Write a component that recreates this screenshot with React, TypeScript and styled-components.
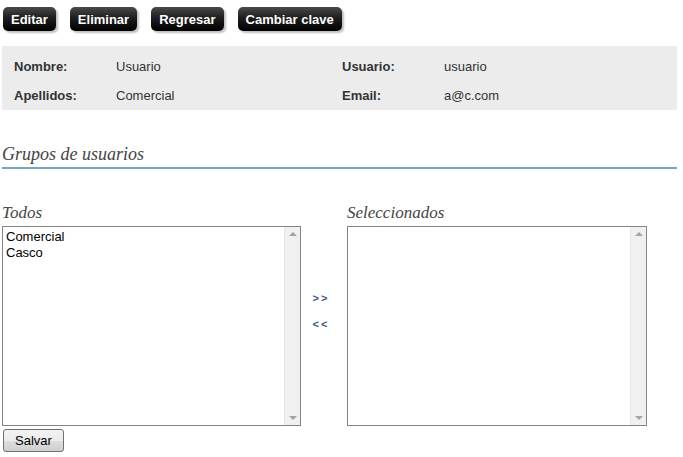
import React from "react";
import styled, { createGlobalStyle } from "styled-components";

const GlobalStyle = createGlobalStyle`
  body {
    margin: 0;
    background: #ffffff;
    font-family: "Liberation Sans", Arial, sans-serif;
    color: #333;
  }
`;

const Page = styled.div`
  width: 683px;
  padding: 7px 6px 0 2px;
  box-sizing: border-box;
`;

const Toolbar = styled.div`
  display: flex;
  gap: 14px;
  padding-left: 1px;
  height: 24px;
`;

const DarkButton = styled.button`
  height: 24px;
  padding: 0 8px;
  border: none;
  border-radius: 5px;
  background: linear-gradient(#4a4a4a 0%, #1e1e1e 45%, #000 100%);
  color: #fff;
  font-family: "Liberation Sans", Arial, sans-serif;
  font-weight: bold;
  font-size: 13px;
  box-shadow: 2px 2px 2px rgba(0, 0, 0, 0.25);
  cursor: pointer;
`;

const InfoPanel = styled.div`
  margin-top: 15px;
  background: #ececec;
  height: 64px;
  display: grid;
  grid-template-columns: 102px 226px 102px 1fr;
  grid-template-rows: 29px 29px;
  padding: 6px 0 0 12px;
  box-sizing: border-box;
  align-items: center;
  font-size: 13px;
  color: #333;
`;

const Label = styled.div`
  font-weight: bold;
`;

const Value = styled.div``;

const SectionTitle = styled.h2`
  margin: 34px 0 0;
  font-family: "Liberation Serif", "Times New Roman", serif;
  font-style: italic;
  font-weight: normal;
  font-size: 18px;
  color: #444;
  padding-bottom: 2px;
  border-bottom: 2px solid #72a7bf;
`;

const Columns = styled.div`
  margin-top: 34px;
  display: grid;
  grid-template-columns: 299px 46px 300px;
  align-items: start;
`;

const Column = styled.div`
  display: flex;
  flex-direction: column;
`;

const ColumnTitle = styled.div`
  font-family: "Liberation Serif", "Times New Roman", serif;
  font-style: italic;
  font-size: 17px;
  color: #444;
  height: 23px;
  line-height: 20px;
`;

const ListBox = styled.div`
  height: 200px;
  border: 1px solid #848484;
  box-sizing: border-box;
  display: flex;
  background: #fff;
`;

const Items = styled.div`
  flex: 1;
  padding: 2px 3px;
  font-size: 13px;
  line-height: 16px;
  color: #000;
`;

const ScrollTrack = styled.div`
  width: 16px;
  background: #f0f0f0;
  border-left: 1px solid #e6e6e6;
  display: flex;
  flex-direction: column;
  justify-content: space-between;
  align-items: center;
  padding: 5px 0;
  box-sizing: border-box;
`;

const Arrow = styled.div<{ $down?: boolean }>`
  width: 0;
  height: 0;
  border-left: 4px solid transparent;
  border-right: 4px solid transparent;
  ${(p) =>
    p.$down
      ? "border-top: 4px solid #a3a3a3;"
      : "border-bottom: 4px solid #a3a3a3;"}
`;

const Movers = styled.div`
  display: flex;
  flex-direction: column;
  align-items: center;
  gap: 12px;
  padding: 88px 6px 0 0;
`;

const MoveLink = styled.a`
  font-size: 11px;
  font-weight: bold;
  color: #3b5a82;
  letter-spacing: 2px;
  text-decoration: none;
  line-height: 14px;
  cursor: pointer;
`;

const SaveButton = styled.button`
  margin-top: 3px;
  margin-left: 1px;
  height: 23px;
  padding: 0 11px;
  border: 1px solid #707070;
  border-radius: 3px;
  background: linear-gradient(#f2f2f2 0%, #ebebeb 50%, #dddddd 51%, #cfcfcf 100%);
  font-family: "Liberation Sans", Arial, sans-serif;
  font-size: 13px;
  color: #000;
`;

const List = ({ items }: { items: string[] }) => (
  <ListBox>
    <Items>
      {items.map((i) => (
        <div key={i}>{i}</div>
      ))}
    </Items>
    <ScrollTrack>
      <Arrow />
      <Arrow $down />
    </ScrollTrack>
  </ListBox>
);

export default function App() {
  return (
    <Page>
      <GlobalStyle />
      <Toolbar>
        <DarkButton>Editar</DarkButton>
        <DarkButton>Eliminar</DarkButton>
        <DarkButton>Regresar</DarkButton>
        <DarkButton>Cambiar clave</DarkButton>
      </Toolbar>
      <InfoPanel>
        <Label>Nombre:</Label>
        <Value>Usuario</Value>
        <Label>Usuario:</Label>
        <Value>usuario</Value>
        <Label>Apellidos:</Label>
        <Value>Comercial</Value>
        <Label>Email:</Label>
        <Value>a@c.com</Value>
      </InfoPanel>
      <SectionTitle>Grupos de usuarios</SectionTitle>
      <Columns>
        <Column>
          <ColumnTitle>Todos</ColumnTitle>
          <List items={["Comercial", "Casco"]} />
        </Column>
        <Movers>
          <MoveLink>&gt;&gt;</MoveLink>
          <MoveLink>&lt;&lt;</MoveLink>
        </Movers>
        <Column>
          <ColumnTitle>Seleccionados</ColumnTitle>
          <List items={[]} />
        </Column>
      </Columns>
      <SaveButton>Salvar</SaveButton>
    </Page>
  );
}
